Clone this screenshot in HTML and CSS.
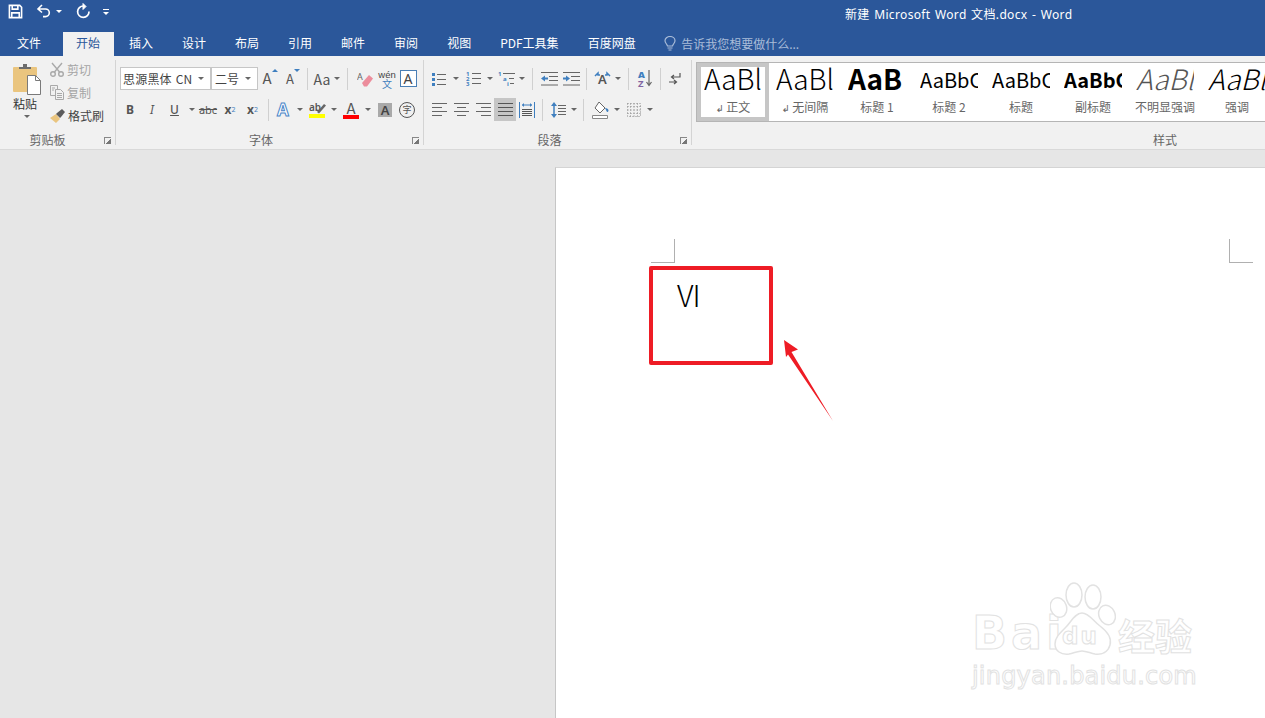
FILE: index.html
```html
<!DOCTYPE html>
<html lang="en">
<head>
    <meta charset="UTF-8">
    <title>新建 Microsoft Word 文档.docx - Word</title>
    <link rel="stylesheet" href="styles.css">
</head>
<body>
    <div class="titlebar">
        <div class="qat">
            <svg class="qat-save" width="15" height="15" viewBox="0 0 16 16" fill="none" stroke="#fff" stroke-width="1.7"><path d="M1.5 1.5h11l2 2v11h-13z"/><path d="M4.5 1.5v4h6v-4M4 14.5v-5h8v5"/></svg>
            <svg class="qat-undo" width="15" height="16" viewBox="0 0 15 16" fill="none" stroke="#fff" stroke-width="1.6"><path d="M6 2L2 6l4 3.5M2 6h7.5a3.8 3.8 0 0 1 0 7.6H7"/></svg>
            <span class="qat-caret"></span>
            <svg class="qat-redo" width="16" height="16" viewBox="0 0 16 16" fill="none" stroke="#fff" stroke-width="1.7"><path d="M8.5 3A5.7 5.7 0 1 0 14 8.5"/><path d="M8 .5v6l3-3z" fill="#fff" stroke-width="1"/></svg>
            <span class="qat-more"></span>
        </div>
        <div class="doc-title">新建 Microsoft Word 文档.docx - Word</div>
    </div>

    <div class="tabs">
        <span class="tab tab-file">文件</span>
        <span class="tab tab-active">开始</span>
        <span class="tab">插入</span>
        <span class="tab">设计</span>
        <span class="tab">布局</span>
        <span class="tab">引用</span>
        <span class="tab">邮件</span>
        <span class="tab">审阅</span>
        <span class="tab">视图</span>
        <span class="tab">PDF工具集</span>
        <span class="tab">百度网盘</span>
        <span class="tell-me">
            <svg width="12" height="15" viewBox="0 0 12 15" fill="none" stroke="#a9bcd8" stroke-width="1.2"><path d="M3.5 10C3 8 1 7 1 4.8a5 4.3 0 0 1 10 0C11 7 9 8 8.5 10z"/><path d="M3.5 12h5M4.5 14h3"/></svg>
            告诉我您想要做什么...
        </span>
    </div>

    <div class="ribbon">
        <section class="group group-clip">
            <div class="clip-body">
                <div class="paste">
                    <svg width="29" height="32" viewBox="0 0 29 32"><rect x="0" y="3" width="24" height="25" rx="1" fill="#eac57f"/><path d="M6 5V3h4V0h4v3h4v2z" fill="#6c6c6c"/><path d="M14.500 11.500h8l5 5v14h-13z" fill="#fff" stroke="#7a7a7a"/><path d="M22.500 11.500v5h5" fill="none" stroke="#7a7a7a"/></svg>
                    <span class="paste-label">粘贴</span>
                    <span class="caret paste-caret"></span>
                </div>
                <div class="clip-small">
                    <div class="clip-row muted">
                        <svg width="14" height="15" viewBox="0 0 14 15" fill="none" stroke="#a9a9a9" stroke-width="1.4"><circle cx="3" cy="12" r="2.300"/><circle cx="11" cy="12" r="2.300"/><path d="M2 1l7.500 9M12 1L4.500 10"/></svg>
                        剪切
                    </div>
                    <div class="clip-row muted">
                        <svg width="14" height="15" viewBox="0 0 14 15" fill="#f1f1f1" stroke="#a9a9a9"><path d="M.5.500h7v10h-7z"/><path d="M5.500 4.500h5l3 3v7h-8z"/><path d="M7 8.500h5M7 10.500h5M7 12.500h5M2 3h3M2 5h2"/></svg>
                        复制
                    </div>
                    <div class="clip-row">
                        <svg width="15" height="14" viewBox="0 0 15 14"><path d="M0 9l6-4 4 5-4 4z" fill="#eac57f"/><path d="M7 4l5-4 3 3-4 5-1 1-4-4z" fill="#5c5c5c"/></svg>
                        格式刷
                    </div>
                </div>
            </div>
            <div class="group-label"><span></span><span>剪贴板</span><span class="launcher"></span></div>
        </section>

        <section class="group group-font">
            <div class="row row-top">
                <div class="combo combo-font"><span>思源黑体 CN</span><span class="caret"></span></div>
                <div class="combo combo-size"><span>二号</span><span class="caret"></span></div>
                <span class="btn w24 glyph-lg">A<i class="tri-up"></i></span>
                <span class="btn w22 glyph-md">A<i class="tri-down"></i></span>
                <span class="sep w6"></span>
                <span class="btn w24 glyph-aa">Aa</span>
                <span class="btn w6 caret"></span>
                <span class="sep w14"></span>
                <span class="btn w22">
                    <svg width="16" height="17" viewBox="0 -1 16 17"><text x="0" y="9" class="svg-a">A</text><path d="M5 12l7-8 4 3.500-6 8H7z" fill="#ec8d9c"/></svg>
                </span>
                <span class="btn w22 wen"><b>wén</b><em>文</em></span>
                <span class="btn w20"><span class="box-a">A</span></span>
            </div>
            <div class="row">
                <span class="btn w22 fmt-b">B</span>
                <span class="btn w22 fmt-i">I</span>
                <span class="btn w23 fmt-u">U</span>
                <span class="btn w11 caret"></span>
                <span class="btn w22 fmt-abc">abc</span>
                <span class="btn w22 fmt-x">x<sub>2</sub></span>
                <span class="btn w23 fmt-x">x<sup>2</sup></span>
                <span class="sep w8"></span>
                <span class="btn w22 fx-a">A</span>
                <span class="btn w12 caret"></span>
                <span class="btn w22">
                    <svg width="17" height="19" viewBox="0 0 17 19"><text x="0" y="11" class="svg-ab">ab</text><path d="M8 12l7-8 2 1.500-7 8z" fill="#666"/><rect y="14" width="16" height="4" fill="#ffff00"/></svg>
                </span>
                <span class="btn w12 caret"></span>
                <span class="btn w22 color-a"><span>A</span><i></i></span>
                <span class="btn w12 caret"></span>
                <span class="btn w22"><span class="shade-a">A</span></span>
                <span class="btn w22"><span class="circle-zi">字</span></span>
            </div>
            <div class="group-label"><span></span><span>字体</span><span class="launcher"></span></div>
        </section>

        <section class="group group-para">
            <div class="row row-top">
                <span class="btn w22"><svg width="14" height="14" viewBox="0 0 14 14"><g fill="#3f7fbf"><rect x="0" y="1" width="3" height="3"/><rect x="0" y="6" width="3" height="3"/><rect x="0" y="11" width="3" height="3"/></g><path d="M5 2.500h9M5 7.500h9M5 12.500h9" stroke="#666"/></svg></span>
                <span class="btn w12 caret"></span>
                <span class="btn w22"><svg width="15" height="19" viewBox="0 -2 15 19"><g class="svg-num"><text x="0" y="5">1</text><text x="0" y="10">2</text><text x="0" y="15">3</text></g><path d="M6 2.500h9M6 7.500h9M6 12.500h9" stroke="#666"/></svg></span>
                <span class="btn w11 caret"></span>
                <span class="btn w22"><svg width="17" height="20" viewBox="0 -2 17 20"><g class="svg-num"><text x="0" y="5">1</text><text x="5" y="10">a</text><text x="9" y="15">i</text></g><path d="M5 2.500h12M11 7.500h5M12 12.500h4" stroke="#666"/></svg></span>
                <span class="btn w10 caret"></span>
                <span class="sep w11"></span>
                <span class="btn w22"><svg width="17" height="14" viewBox="0 0 17 14"><path d="M0 .5h17M8 4.500h9M8 8.500h9M0 13h17" stroke="#666"/><path d="M0 6.500l4-3v2h3v2H4v2z" fill="#3f7fbf"/></svg></span>
                <span class="btn w22"><svg width="17" height="14" viewBox="0 0 17 14"><path d="M0 .5h17M8 4.500h9M8 8.500h9M0 13h17" stroke="#666"/><path d="M7 6.500l-4-3v2H0v2h3v2z" fill="#3f7fbf"/></svg></span>
                <span class="sep w9"></span>
                <span class="btn w22"><svg width="17" height="20" viewBox="0 -1 17 20"><text x="4" y="14" class="svg-a-lg">A</text><path d="M1 6l3-3v2h2M16 6l-3-3v2h-2" fill="none" stroke="#3f7fbf" stroke-width="1.500"/></svg></span>
                <span class="btn w9 caret"></span>
                <span class="sep w12"></span>
                <span class="btn w22 sort"><span class="sort-az"><b>A</b><em>Z</em></span><svg width="6" height="17" viewBox="0 0 6 17"><path d="M3 0v15M.5 12L3 15.500 5.500 12" fill="none" stroke="#666" stroke-width="1.200"/></svg></span>
                <span class="sep w8"></span>
                <span class="btn w22"><svg width="12" height="14" viewBox="0 0 12 14" fill="none" stroke="#555" stroke-width="1.200"><path d="M11 1v4H3M5 3L2.500 5 5 7M0 10h7M5 8l2.500 2L5 12"/></svg></span>
            </div>
            <div class="row">
                <span class="btn w22"><svg width="15" height="13" viewBox="0 0 15 13"><path d="M0 .5h15M0 4.500h10M0 8.500h15M0 12.500h10" stroke="#666"/></svg></span>
                <span class="btn w22"><svg width="15" height="13" viewBox="0 0 15 13"><path d="M0 .5h15M3 4.500h9M0 8.500h15M3 12.500h9" stroke="#666"/></svg></span>
                <span class="btn w22"><svg width="15" height="13" viewBox="0 0 15 13"><path d="M0 .5h15M5 4.500h10M0 8.500h15M5 12.500h10" stroke="#666"/></svg></span>
                <span class="btn w22 btn-on"><svg width="15" height="13" viewBox="0 0 15 13"><path d="M0 .5h15M0 4.500h15M0 8.500h15M0 12.500h15" stroke="#555"/></svg></span>
                <span class="btn w22"><svg width="16" height="16" viewBox="0 0 16 16"><path d="M.5 0v16M15.500 0v16M3 3h10" stroke="#3f7fbf" fill="none"/><path d="M3 3l2-2v4zM13 3l-2-2v4z" fill="#3f7fbf"/><path d="M3 7.500h10M3 9.500h10M3 11.500h10M3 13.500h10" stroke="#555"/></svg></span>
                <span class="sep w9"></span>
                <span class="btn w22"><svg width="15" height="16" viewBox="0 0 15 16"><path d="M3 2v12" stroke="#3f7fbf" stroke-width="1.500"/><path d="M3 0l3 4H0zM3 16l3-4H0z" fill="#3f7fbf"/><path d="M7 3.500h8M7 6.500h8M7 9.500h8M7 12.500h8" stroke="#666"/></svg></span>
                <span class="btn w9 caret"></span>
                <span class="sep w11"></span>
                <span class="btn w22"><svg width="17" height="18" viewBox="0 0 17 18"><path d="M7 1l6 6-5 5-5-5z" fill="#fff" stroke="#666"/><path d="M13 7c2 0 3.500 1 3.500 2.500 0 1-1 1.500-1.500 1.500-.5-1-1-2-2-4z" fill="#3f7fbf"/><path d="M.5 14.500h15v3H.5z" fill="#fff" stroke="#888"/></svg></span>
                <span class="btn w12 caret"></span>
                <span class="btn w22"><svg width="14" height="14" viewBox="0 0 14 14"><path d="M.5.500h13v13H.5zM.5 7h13M7 .5v13M3.500.5v13M10.500.5v13M.5 3.500h13M.5 10.500h13" fill="none" stroke="#8a8a8a" stroke-dasharray="1 2"/></svg></span>
                <span class="btn w10 caret"></span>
            </div>
            <div class="group-label"><span></span><span>段落</span><span class="launcher"></span></div>
        </section>

        <section class="group group-styles">
            <div class="gallery">
                <div class="style-item style-selected"><div class="sample">AaBl</div><div class="style-name"><i>↲</i>正文</div></div>
                <div class="style-item"><div class="sample">AaBl</div><div class="style-name"><i>↲</i>无间隔</div></div>
                <div class="style-item"><div class="sample sample-h1">AaB</div><div class="style-name">标题 1</div></div>
                <div class="style-item"><div class="sample sample-sm">AaBbC</div><div class="style-name">标题 2</div></div>
                <div class="style-item"><div class="sample sample-sm">AaBbC</div><div class="style-name">标题</div></div>
                <div class="style-item"><div class="sample sample-sm sample-bold">AaBbC</div><div class="style-name">副标题</div></div>
                <div class="style-item"><div class="sample sample-subtle">AaBl</div><div class="style-name">不明显强调</div></div>
                <div class="style-item"><div class="sample sample-em">AaBl</div><div class="style-name">强调</div></div>
            </div>
            <div class="group-label"><span></span><span>样式</span><span></span></div>
        </section>
    </div>

    <div class="workspace">
        <div class="page">
            <div class="page-marks"><span class="mark mark-left"></span><span class="mark mark-right"></span></div>
            <p class="page-text">VI</p>
        </div>

        <div class="red-box"></div>
        <svg class="red-arrow" width="60" height="90" viewBox="0 0 60 90"><path d="M4 0L18 9.500 11.500 12 53 81 8 14.500 6 17z" fill="#ee1c25"/></svg>

        <div class="watermark">
            <div class="wm-top">
                <span class="wm-bai">Bai</span>
                <span class="wm-paw">
                    <svg width="66" height="74" viewBox="0 0 66 74" fill="#fff" stroke="#e2e2e2" stroke-width="1.500"><ellipse cx="8.500" cy="25.500" rx="8" ry="10" transform="rotate(-20 8.500 25.500)"/><ellipse cx="24" cy="13" rx="8" ry="12"/><ellipse cx="43" cy="15" rx="8" ry="12"/><ellipse cx="57" cy="33" rx="8" ry="10" transform="rotate(-25 57 33)"/><path d="M32 31c7 0 11 8 18 13 8 6 12 12 10 19-2 7-8 10-15 9-5-1-9-3-13-3-4 0-8 2-13 3-8 1-14-3-14-10 0-7 6-12 11-17 5-5 9-14 16-14z"/></svg>
                    <span class="wm-du">du</span>
                </span>
                <span class="wm-cn">经验</span>
            </div>
            <div class="wm-url">jingyan.baidu.com</div>
        </div>
    </div>
</body>
</html>
```

FILE: styles.css
```css
* {
    margin: 0;
    padding: 0;
    box-sizing: border-box;
}

html, body {
    height: 100%;
}

body {
    font-family: "Noto Sans CJK SC", sans-serif;
    font-size: 12px;
    color: #444;
    background: #e6e6e6;
    display: flex;
    flex-direction: column;
    overflow: hidden;
}

/* title bar */
.titlebar {
    height: 32px;
    flex: none;
    background: #2b579a;
    color: white;
    display: flex;
    align-items: flex-start;
}

.qat {
    width: 845px;
    height: 22px;
    padding-left: 8px;
    display: flex;
    align-items: center;
}

.qat-undo {
    margin-left: 13px;
}

.qat-caret {
    margin-left: 5px;
    border-top: 3px solid white;
    border-left: 3px solid transparent;
    border-right: 3px solid transparent;
}

.qat-redo {
    margin-left: 13px;
}

.qat-more {
    margin-left: 12px;
    width: 6px;
    height: 5px;
    border-top: 1px solid white;
    position: relative;
}

.qat-more::after {
    content: '';
    position: absolute;
    top: 2px;
    left: 0;
    border-top: 3px solid white;
    border-left: 3px solid transparent;
    border-right: 3px solid transparent;
}

.doc-title {
    font-family: "Noto Sans", "Noto Sans CJK SC", sans-serif;
    line-height: 30px;
    word-spacing: 1px;
    letter-spacing: 0.35px;
    white-space: nowrap;
}

/* tabs */
.tabs {
    height: 24px;
    flex: none;
    background: #2b579a;
    color: white;
    padding-left: 2.5px;
    display: flex;
    align-items: flex-start;
}

.tab {
    height: 24px;
    line-height: 22px;
    padding: 0 14.5px;
    white-space: nowrap;
}

.tab-file {
    margin-right: 7.5px;
}

.tab-active {
    background: #f1f1f1;
    color: #2b579a;
    padding: 0 14px 0 13px;
    margin-right: 0.5px;
}

.tell-me {
    height: 22px;
    margin-left: 14px;
    color: #a9bcd8;
    display: flex;
    align-items: center;
    gap: 5px;
}

/* ribbon */
.ribbon {
    height: 94px;
    flex: none;
    background: #f1f1f1;
    border-bottom: 1px solid #d9d9d9;
    display: flex;
    overflow: hidden;
}

.group {
    flex: none;
    margin: 4px 0;
    border-right: 1px solid #d4d4d4;
    display: flex;
    flex-direction: column;
}

.group-clip {
    width: 116px;
}

.group-font {
    width: 308px;
    padding-left: 3px;
}

.group-font .row-top {
    padding-left: 1px;
}

.group-para {
    width: 268px;
    padding-left: 4px;
}

.group-styles {
    width: 946px;
    border-right: none;
    padding-left: 4px;
}

.group-label {
    margin-top: auto;
    margin-bottom: -2px;
    height: 14px;
    line-height: 14px;
    padding-right: 20px;
    color: #666;
    display: grid;
    grid-template-columns: 1fr auto 1fr;
    align-items: end;
}

.group-styles .group-label {
    padding-right: 4px;
}

.launcher {
    justify-self: end;
    width: 7px;
    height: 7px;
    margin: 0 -16px 3px 0;
    border-left: 1px solid #888;
    border-top: 1px solid #888;
    background: linear-gradient(135deg, transparent 55%, #777 55%);
}

.row {
    height: 23px;
    margin-top: 8px;
    display: flex;
    align-items: center;
}

.row-top {
    margin-top: 7px;
}

.btn {
    flex: none;
    height: 23px;
    display: flex;
    align-items: center;
    justify-content: center;
    color: #555;
}

.btn-on {
    background: #c6c6c6;
}

.w6 { width: 6px; }
.w8 { width: 8px; }
.w9 { width: 9px; }
.w10 { width: 10px; }
.w11 { width: 11px; }
.w12 { width: 12px; }
.w14 { width: 14px; }
.w20 { width: 20px; }
.w22 { width: 22px; }
.w23 { width: 23px; }
.w24 { width: 24px; }

.caret::before {
    content: '';
    border-top: 3px solid #666;
    border-left: 3px solid transparent;
    border-right: 3px solid transparent;
}

.sep {
    flex: none;
    height: 22px;
    display: flex;
    justify-content: center;
}

.sep::before {
    content: '';
    width: 1px;
    background: #d0d0d0;
}

/* clipboard */
.clip-body {
    display: flex;
}

.paste {
    width: 50px;
    padding: 4px 0 0 13px;
    display: flex;
    flex-direction: column;
    align-items: flex-start;
}

.paste-label {
    line-height: 16px;
    color: #333;
}

.paste-caret {
    margin: 3px 0 0 11px;
    height: 6px;
    display: flex;
}

.clip-small {
    margin-top: -2px;
}

.clip-row {
    height: 23px;
    display: flex;
    align-items: center;
    gap: 3px;
    white-space: nowrap;
}

.muted {
    color: #a5a5a5;
}

/* font group */
.combo {
    flex: none;
    height: 23px;
    background: white;
    border: 1px solid #c6c6c6;
    padding: 0 4px 0 2px;
    display: flex;
    align-items: center;
    justify-content: space-between;
    white-space: nowrap;
    color: #444;
}

.combo-font {
    width: 91px;
    word-spacing: 1px;
    letter-spacing: 0.2px;
}

.combo-size {
    width: 47px;
    padding-left: 3px;
}

.combo .caret {
    margin-right: 2px;
    display: flex;
}

.glyph-lg {
    font-size: 15px;
    align-items: flex-end;
    padding-bottom: 2px;
}

.glyph-md {
    font-size: 13px;
    align-items: flex-end;
    padding-bottom: 2px;
}

.tri-up,
.tri-down {
    align-self: flex-start;
    margin-top: 2px;
    border-left: 3px solid transparent;
    border-right: 3px solid transparent;
}

.tri-up {
    border-bottom: 3px solid #3f7fbf;
}

.tri-down {
    border-top: 3px solid #3f7fbf;
}

.glyph-aa {
    font-size: 14px;
}

.wen {
    flex-direction: column;
    line-height: 9px;
}

.wen b {
    font-family: "Liberation Sans", sans-serif;
    font-size: 9.5px;
    font-weight: 400;
    color: #444;
}

.wen em {
    font-size: 10px;
    font-style: normal;
    color: #3f7fbf;
}

.box-a {
    width: 17px;
    height: 17px;
    line-height: 15px;
    border: 1px solid #4a7fb5;
    background: white;
    text-align: center;
    font-family: "Noto Sans", sans-serif;
    font-size: 14px;
    color: #444;
}

.fmt-b {
    font-family: "Noto Sans", sans-serif;
    font-weight: 700;
}

.fmt-i {
    font-family: "Noto Sans", sans-serif;
    font-style: italic;
}

.fmt-u {
    font-family: "Noto Sans", sans-serif;
    text-decoration: underline;
    font-weight: 500;
}

.fmt-abc {
    font-family: "Noto Sans", sans-serif;
    font-size: 11px;
    text-decoration: line-through;
}

.fmt-x {
    font-family: "Noto Sans", sans-serif;
    font-weight: 700;
}

.fmt-x sub,
.fmt-x sup {
    font-size: 7px;
    font-weight: 400;
    color: #3f7fbf;
}

.fx-a {
    font-family: "Noto Sans", sans-serif;
    font-size: 17px;
    font-weight: 700;
    color: white;
    -webkit-text-stroke: 1px #4a86c8;
}

.color-a {
    flex-direction: column;
    font-size: 15px;
    line-height: 14px;
}

.color-a i {
    width: 16px;
    height: 4px;
    background: #ff0000;
}

.shade-a {
    width: 14px;
    height: 14px;
    line-height: 14px;
    text-align: center;
    background: #a9a9a9;
    font-family: "Noto Sans", sans-serif;
    font-size: 13px;
    font-weight: 600;
    color: #444;
}

.circle-zi {
    width: 16px;
    height: 16px;
    line-height: 14px;
    border: 1px solid #555;
    border-radius: 50%;
    text-align: center;
    font-size: 9px;
}

.svg-a {
    font-family: "Noto Sans", sans-serif;
    font-size: 9px;
    fill: #666;
}

.svg-a-lg {
    font-family: "Noto Sans", sans-serif;
    font-size: 13px;
    font-weight: 600;
    fill: #555;
}

.svg-ab {
    font-family: "Noto Sans", sans-serif;
    font-size: 10px;
    font-weight: 600;
    fill: #555;
}

.svg-num text {
    font-family: "Noto Sans", sans-serif;
    font-size: 6px;
    font-weight: 700;
    fill: #3f7fbf;
}

.sort {
    gap: 1px;
}

.sort-az {
    display: flex;
    flex-direction: column;
    font-family: "Noto Sans", sans-serif;
    font-size: 9.5px;
    line-height: 9px;
    font-weight: 700;
}

.sort-az b {
    color: #3f7fbf;
}

.sort-az em {
    font-style: normal;
    color: #8064a2;
}

/* styles gallery */
.gallery {
    margin-top: 2px;
    height: 60px;
    background: white;
    border: 1px solid #b5b5b5;
    display: flex;
}

.style-item {
    flex: none;
    width: 72px;
    height: 58px;
    border: 4px solid transparent;
    text-align: center;
}

.style-selected {
    border-color: #c6c6c6;
}

.sample {
    height: 32px;
    margin: 0 0 0 3px;
    width: 58px;
    overflow: hidden;
    text-align: left;
    white-space: nowrap;
    font-size: 28px;
    line-height: 22px;
    font-weight: 300;
    color: #000;
}

.sample-h1 {
    font-weight: 700;
}

.sample-sm {
    font-size: 20px;
    line-height: 26px;
    font-weight: 400;
}

.sample-bold {
    font-weight: 700;
}

.sample-subtle {
    font-style: italic;
    color: #555;
}

.sample-em {
    font-style: italic;
}

.style-name {
    line-height: 16px;
    color: #666;
    white-space: nowrap;
}

.style-name i {
    font-family: "DejaVu Sans", sans-serif;
    font-style: normal;
    font-size: 10px;
    margin-right: 2px;
}

/* document */
.workspace {
    flex: 1;
    position: relative;
    overflow: hidden;
    padding: 17px 0 0 555px;
}

.page {
    width: 100%;
    height: 100%;
    background: white;
    border-left: 1px solid #c6c6c6;
    border-top: 1px solid #d4d4d4;
    padding: 71px 12px 0 95px;
}

.page-marks {
    display: flex;
    justify-content: space-between;
}

.mark {
    width: 24px;
    height: 24px;
    border-bottom: 1px solid #b0b0b0;
}

.mark-left {
    border-right: 1px solid #b0b0b0;
}

.mark-right {
    border-left: 1px solid #b0b0b0;
}

.page-text {
    margin: 11px 0 0 26px;
    font-size: 30px;
    line-height: 40px;
    font-weight: 300;
    letter-spacing: -1px;
    color: #000;
}

.red-box {
    position: absolute;
    left: 649px;
    top: 116px;
    width: 124px;
    height: 99px;
    border: 4.5px solid #ee1c25;
    border-radius: 2px;
}

.red-arrow {
    position: absolute;
    left: 780px;
    top: 190px;
}

.watermark {
    position: absolute;
    left: 972px;
    top: 430px;
    width: 230px;
    color: white;
    -webkit-text-stroke: 1px #e2e2e2;
}

.wm-top {
    height: 78px;
    display: flex;
    align-items: flex-end;
}

.wm-bai {
    width: 78px;
    flex: none;
    font-family: "DejaVu Sans", sans-serif;
    font-size: 46px;
    line-height: 50px;
    font-weight: 700;
    letter-spacing: 4px;
}

.wm-paw {
    width: 68px;
    height: 76px;
    position: relative;
    flex: none;
}

.wm-du {
    position: absolute;
    left: 12px;
    bottom: 8px;
    font-family: "DejaVu Sans", sans-serif;
    font-size: 23px;
    line-height: 28px;
    font-weight: 700;
    letter-spacing: 2px;
}

.wm-cn {
    font-size: 37px;
    line-height: 46px;
    font-weight: 700;
}

.wm-url {
    margin-top: 4px;
    font-family: "DejaVu Sans", sans-serif;
    font-size: 24px;
    line-height: 28px;
    letter-spacing: 0.2px;
    white-space: nowrap;
}
```
